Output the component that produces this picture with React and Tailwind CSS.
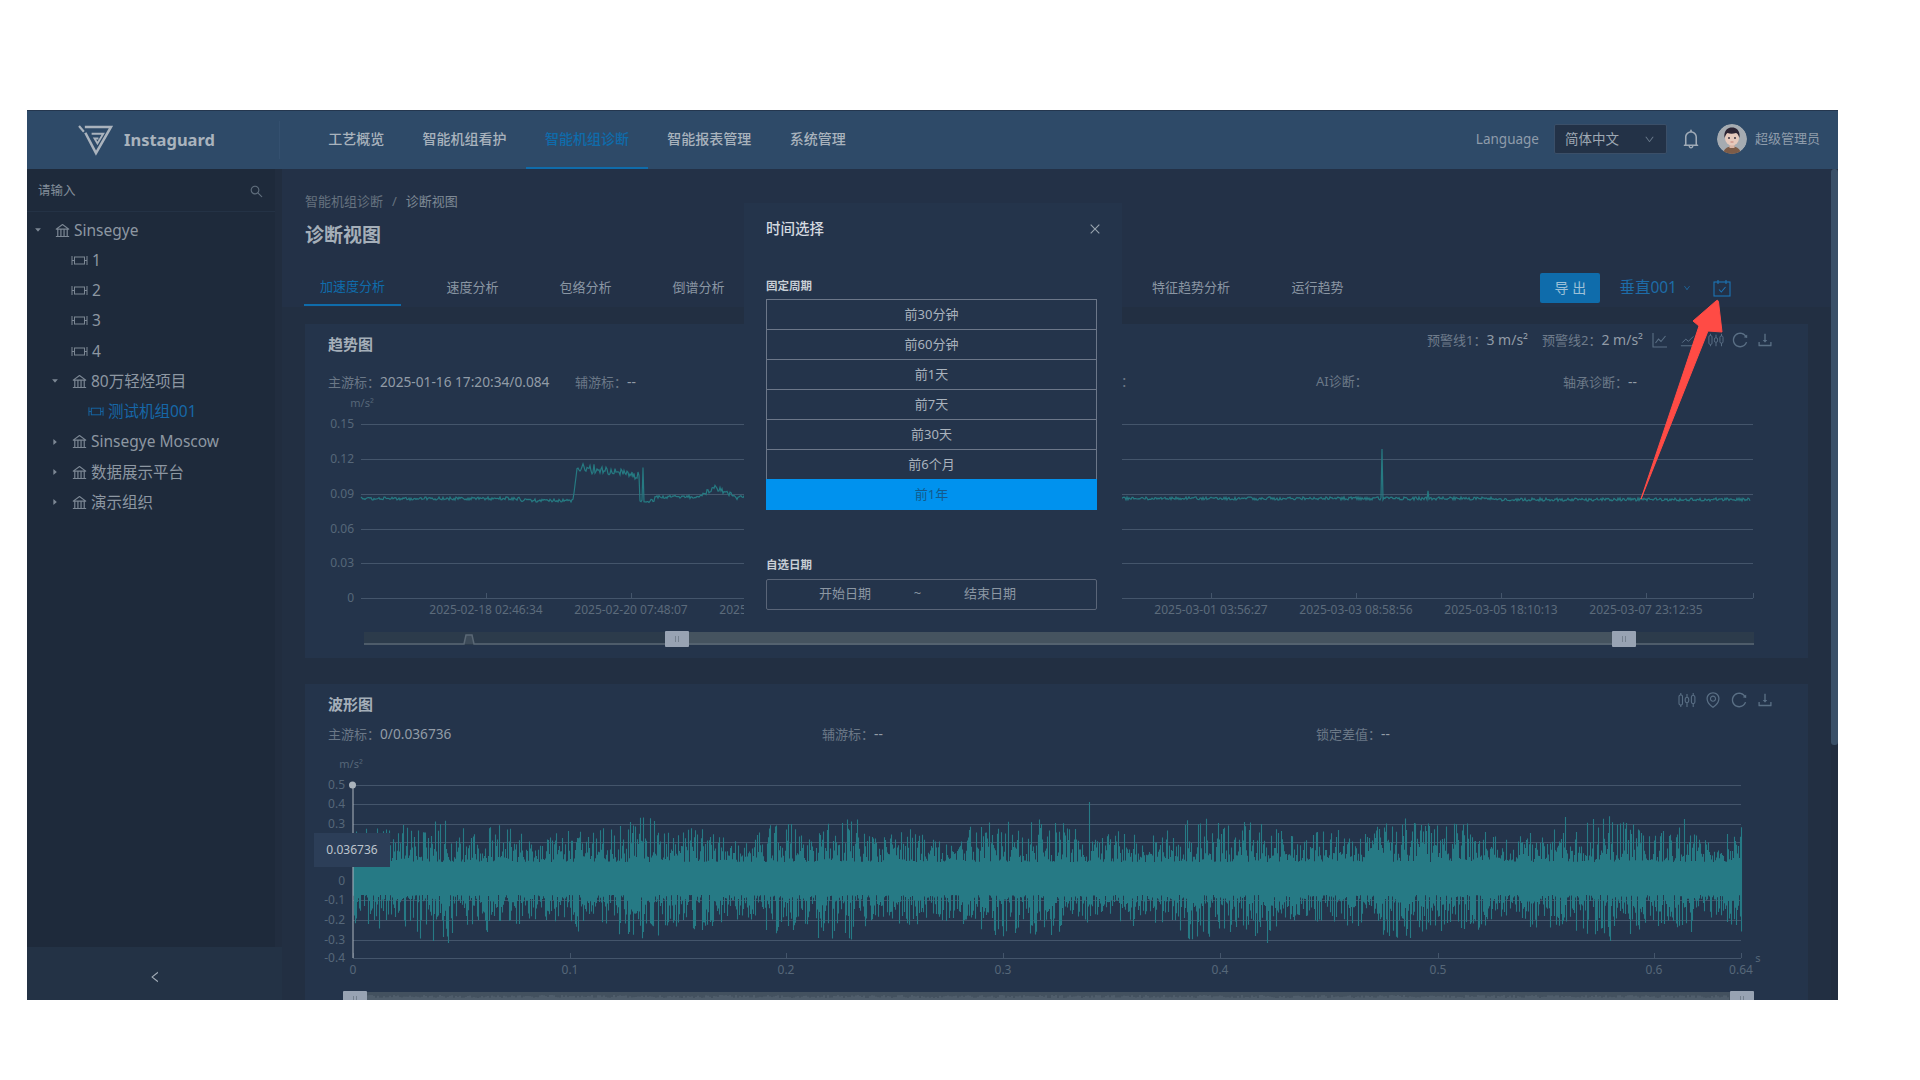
import React from 'react';
import {
    AiOutlineBank,
    AiOutlineBell,
    AiOutlineClose,
    AiOutlineDown,
    AiOutlineDownload,
    AiOutlineEnvironment,
    AiOutlineLeft,
    AiOutlineReload,
    AiOutlineSearch,
    AiFillCaretDown,
    AiFillCaretRight,
} from 'react-icons/ai';

// seeded random so the charts look the same every load
const makeRand = (seed) => () => {
    seed = (seed * 16807) % 2147483647;
    return (seed - 1) / 2147483646;
};

const navItems = ['工艺概览', '智能机组看护', '智能机组诊断', '智能报表管理', '系统管理'];
const presets = ['前30分钟', '前60分钟', '前1天', '前7天', '前30天', '前6个月', '前1年'];
const trendLabels = [
    [486, '2025-02-18 02:46:34'],
    [631, '2025-02-20 07:48:07'],
    [776, '2025-02-22 12:49:40'],
    [1211, '2025-03-01 03:56:27'],
    [1356, '2025-03-03 08:58:56'],
    [1501, '2025-03-05 18:10:13'],
    [1646, '2025-03-07 23:12:35'],
];

const trendPath = () => {
    const r = makeRand(71);
    let d = '';
    for (let x = 361; x <= 1750; x += 1) {
        let y = 498.5;
        if (x >= 520 && x < 573) y = 500.5;
        else if (x >= 573 && x < 577) y = 500 - (x - 573) * 8;
        else if (x >= 577 && x < 640) y = 467 + (x - 577) * 0.14 + (r() - 0.5) * 8;
        else if (x >= 640 && x < 655) y = 501;
        else if (x >= 655 && x < 700) y = 497;
        else if (x >= 700 && x < 745) y = 497 - Math.max(0, 9 - Math.abs(x - 716) * 0.45) + (r() - 0.5) * 4;
        if (x === 643) y = 469;
        if (x === 1382) y = 448;
        if (x === 1428) y = 491;
        if (x > 1500) y += 1;
        y += (r() - 0.5) * 3.2;
        d += `${x === 361 ? 'M' : 'L'}${x} ${y.toFixed(1)}`;
    }
    return d;
};

const wavePath = () => {
    const r = makeRand(913);
    const up = { 403: 825, 1089: 802, 1565: 817, 1684: 819, 1055: 823, 1406: 830 };
    const down = { 448: 943, 1267: 943, 1410: 938, 818: 938, 1691: 932 };
    let d = '';
    for (let x = 353; x <= 1741; x += 1) {
        const env = 1 + 0.2 * Math.sin(x / 31) + 0.12 * Math.sin(x / 11);
        const a = Math.pow(r(), 1.6);
        const b = Math.pow(r(), 1.6);
        const top = up[x] || 862 - a * 36 * env;
        const bottom = down[x] || 895 + b * 36 * env;
        d += `M${x}.5 ${top.toFixed(1)}V${bottom.toFixed(1)}`;
    }
    return d;
};

const miniWave = () => {
    const r = makeRand(37);
    let d = '';
    for (let x = 366; x < 1730; x += 2) {
        d += `M${x} ${(998 - r() * 3).toFixed(1)}V1000`;
    }
    return d;
};

const SliderHandle = ({ x, y }) => (
    <g>
        <rect x={x} y={y} width="24" height="16" rx="1" fill="#98a3b3" />
        <path d={`M${x + 10.5} ${y + 5}v6M${x + 13.5} ${y + 5}v6`} stroke="#75818f" strokeWidth="1" />
    </g>
);

const DeviceIcon = ({ className }) => (
    <svg viewBox="0 0 17 11" fill="none" stroke="currentColor" strokeWidth="1" className={className}>
        <path d="M1 1v9M16 1v9" />
        <rect x="3.500" y="2" width="10" height="7" />
        <path d="M1 5.500h2.500M13.500 5.500H16" />
    </svg>
);

const LineIcon = () => (
    <svg viewBox="0 0 16 16" fill="none" stroke="currentColor" strokeWidth="1.100" className="w-4 h-4">
        <path d="M1 1v14h14M3.500 11l3-4 2.500 2.500L13.500 4" />
    </svg>
);

const AreaIcon = () => (
    <svg viewBox="0 0 18 16" fill="none" stroke="currentColor" strokeWidth="1.100" className="w-4 h-4">
        <path d="M1 14.500h16M2.500 11l4-4 3 2.500L15 4" />
    </svg>
);

const CandleIcon = ({ className }) => (
    <svg viewBox="0 0 18 16" fill="none" stroke="currentColor" strokeWidth="1.100" className={className}>
        <rect x="1" y="3" width="3.500" height="10" rx="1.500" />
        <rect x="7.200" y="5.500" width="3.500" height="5" rx="1.500" />
        <rect x="13.400" y="3.500" width="3.500" height="8" rx="1.500" />
        <path d="M2.800 1v2M2.800 13v2M9 2v3.500M9 10.500V15M15.200 1v2.500M15.200 11.500V15" />
    </svg>
);

const CalendarCheckIcon = () => (
    <svg viewBox="0 0 18 18" fill="none" stroke="currentColor" strokeWidth="1.100" className="w-[18px] h-[18px]">
        <rect x="1" y="3" width="16" height="14" />
        <path d="M5 1v4M13 1v4M6 10.500l2.300 2.500L12.500 8" />
    </svg>
);

const Avatar = () => (
    <svg viewBox="0 0 30 30" className="w-[30px] h-[30px] rounded-full">
        <circle cx="15" cy="15" r="15" fill="#a5abb1" />
        <path d="M6 30c.5-5 4-7.500 9-7.500s8.500 2.500 9 7.500z" fill="#7d5c48" />
        <rect x="12.500" y="18" width="5" height="6" fill="#d9b5a5" />
        <ellipse cx="15" cy="14" rx="7" ry="7.500" fill="#e6c9bc" />
        <path d="M7.500 14C6.500 6 11 3.500 15 3.500S23.500 6 22.500 14c-1-3-2-4.500-3.500-5-3 1-6 1-8.500 0-1.500 1-2 2.500-3 5z" fill="#2c2433" />
        <circle cx="12" cy="14" r=".9" fill="#2c2433" />
        <circle cx="18" cy="14" r=".9" fill="#2c2433" />
        <path d="M13.500 18h3" stroke="#b9695f" strokeWidth=".8" />
    </svg>
);

const TreeGroup = ({ rowClass, caret, name }) => (
    <div className={`h-[30.250px] flex items-center text-[15.500px] text-[#8d97a2] ${rowClass}`}>
        {caret === 'down' ? (
            <AiFillCaretDown className="w-2 h-2 text-[#7c8794]" />
        ) : (
            <AiFillCaretRight className="w-2 h-2 text-[#7c8794]" />
        )}
        <AiOutlineBank className="w-[17px] h-[17px] text-[#7c8794] ml-[12px]" />
        <span className="ml-[3px] whitespace-nowrap">{name}</span>
    </div>
);

const TreeDevice = ({ name }) => (
    <div className="h-[30.250px] flex items-center pl-[44px] text-[15.500px] text-[#8d97a2]">
        <DeviceIcon className="w-[17px] h-[11px] text-[#7c8794]" />
        <span className="ml-[4px]">{name}</span>
    </div>
);

const Sidebar = () => (
    <div className="w-[255px] flex flex-col shrink-0">
        <div className="flex-1 flex min-h-0">
            <div className="w-[248px] bg-[#1e2a3b]">
                <div className="h-[43px] border-b border-[#243245] flex items-center justify-between pt-[2px] pl-[11px] pr-[11px]">
                    <span className="text-[12.500px] text-[#828d99]">请输入</span>
                    <AiOutlineSearch className="w-[15px] h-[15px] text-[#5f6d7c]" />
                </div>
                <div className="pt-[3px]">
                    <TreeGroup rowClass="pl-[7px]" caret="down" name="Sinsegye" />
                    <TreeDevice name="1" />
                    <TreeDevice name="2" />
                    <TreeDevice name="3" />
                    <TreeDevice name="4" />
                    <TreeGroup rowClass="pl-[24px]" caret="down" name="80万轻烃项目" />
                    <div className="h-[30.250px] flex items-center pl-[61px] text-[15.500px] text-[#1668a8]">
                        <DeviceIcon className="w-[16px] h-[11px]" />
                        <span className="ml-[4px] whitespace-nowrap">测试机组001</span>
                    </div>
                    <TreeGroup rowClass="pl-[24px]" caret="right" name="Sinsegye Moscow" />
                    <TreeGroup rowClass="pl-[24px]" caret="right" name="数据展示平台" />
                    <TreeGroup rowClass="pl-[24px]" caret="right" name="演示组织" />
                </div>
            </div>
            <div className="flex-1 bg-[#212d3f]" />
        </div>
        <div className="h-[53px] bg-[#233245] flex items-center justify-center pt-[7px]">
            <AiOutlineLeft className="w-[14px] h-[14px] text-[#a3adb8]" />
        </div>
    </div>
);

const Header = () => (
    <header className="h-[59px] shrink-0 bg-[#2e4a68] border-t border-[#24364e] flex items-center">
        <div className="w-[253px] h-[38px] border-r border-[#34506f] flex items-center pl-[51px] shrink-0">
            <svg viewBox="0 0 36 32" fill="none" stroke="#aab3bd" className="w-[35px] h-[31px]">
                <path d="M7 2h27L18.500 29 7.500 8" strokeWidth="2.600" />
                <path d="M1 1l5 6" strokeWidth="2.200" />
                <path d="M14 9h12l-6 10-3-5h4" strokeWidth="2" />
            </svg>
            <span className="ml-[11px] text-[16.500px] font-bold text-[#a9b3bd]">Instaguard</span>
        </div>
        <nav className="flex ml-[29px] h-full">
            {navItems.map((item) => (
                <div
                    key={item}
                    className={
                        item === '智能机组诊断'
                            ? 'px-[19.200px] pb-[1px] flex items-center text-[14px] font-medium text-[#0f6cab] border-b-2 border-[#0f6cab]'
                            : 'px-[19.200px] pb-[3px] flex items-center text-[14px] font-medium text-[#a9b3bd]'
                    }
                >
                    {item}
                </div>
            ))}
        </nav>
        <div className="ml-auto flex items-center pr-[18px] -mt-[2px]">
            <span className="text-[13.500px] text-[#8f9cab]">Language</span>
            <div className="ml-[15px] w-[113px] h-[30px] bg-[#233247] border border-[#3b4f68] rounded-[2px] flex items-center justify-between pl-[10px] pr-[11px]">
                <span className="text-[13.500px] text-[#9ea8b3]">简体中文</span>
                <AiOutlineDown className="w-[11px] h-[11px] text-[#68788a]" />
            </div>
            <AiOutlineBell className="ml-[13px] w-[22px] h-[22px] text-[#a0abb7]" />
            <div className="ml-[15px]">
                <Avatar />
            </div>
            <span className="ml-[8px] text-[13px] text-[#8f9cab] whitespace-nowrap">超级管理员</span>
        </div>
    </header>
);

const TabsPanel = () => (
    <div className="h-[138px] bg-[#233147] pl-[23px] shrink-0">
        <div className="pt-[22px] h-[41px] flex items-center text-[13px] leading-[18px] text-[#66727f]">
            <span>智能机组诊断</span>
            <span className="mx-[9px]">/</span>
            <span className="text-[#7e8995]">诊断视图</span>
        </div>
        <h1 className="mt-[11px] h-[28px] leading-[28px] text-[19px] font-bold text-[#a5afb9]">诊断视图</h1>
        <div className="mt-[20px] h-[37px] flex items-center text-[13px] text-[#8a96a3]">
            <div className="w-[97px] h-full flex items-center justify-center text-[#0f6cab] border-b-2 border-[#0f6cab] -ml-[1px]">
                加速度分析
            </div>
            <div className="ml-[45px] flex gap-[60px]">
                <span className="w-[53px] text-center">速度分析</span>
                <span className="w-[53px] text-center">包络分析</span>
                <span className="w-[53px] text-center">倒谱分析</span>
            </div>
            <span className="ml-[426px] w-[80px] text-center">特征趋势分析</span>
            <span className="ml-[60px] w-[53px] text-center">运行趋势</span>
            <div className="ml-auto flex items-center pr-[100px]">
                <div className="w-[60px] h-[30px] rounded-[2px] bg-[#0f6cab] text-[#9cc0d8] text-[14px] flex items-center justify-center">
                    导 出
                </div>
                <span className="ml-[19px] text-[15.500px] text-[#1d6ca8]">垂直001</span>
                <AiOutlineDown className="ml-[6px] w-[8px] h-[8px] text-[#1d6ca8]" />
                <div className="ml-[22px] text-[#1d74b4]">
                    <CalendarCheckIcon />
                </div>
            </div>
        </div>
    </div>
);

const Cursor = ({ label, value }) => (
    <span className="text-[13px] text-[#6b7887] whitespace-nowrap">
        {label}
        {value && <span className="text-[13.700px] text-[#929ca7]">{value}</span>}
    </span>
);

const TrendCard = () => {
    const grid = [
        [424.5, '0.15'],
        [459.5, '0.12'],
        [494.5, '0.09'],
        [529.5, '0.06'],
        [563.5, '0.03'],
        [598.5, '0'],
    ];
    return (
        <section className="ml-[23px] w-[1503px] h-[334px] bg-[#24344b] shrink-0">
            <div className="h-[40px] pl-[23px] pr-[34px] flex items-center justify-between">
                <h2 className="text-[15px] font-bold text-[#a5afb9]">趋势图</h2>
                <div className="flex items-center -mt-[8px] text-[13px] text-[#6f7c8b]">
                    <span>
                        预警线1：<span className="text-[14px] text-[#929ca7]">3 m/s²</span>
                    </span>
                    <span className="ml-[14px]">
                        预警线2：<span className="text-[14px] text-[#929ca7]">2 m/s²</span>
                    </span>
                    <div className="ml-[9px] flex items-center text-[#5a6f85]">
                        <LineIcon />
                        <div className="ml-[12px]">
                            <AreaIcon />
                        </div>
                        <CandleIcon className="ml-[12px] w-4 h-4" />
                        <AiOutlineReload className="ml-[7px] w-[18px] h-[18px]" />
                        <AiOutlineDownload className="ml-[7px] w-[18px] h-[18px]" />
                    </div>
                </div>
            </div>
            <div className="mt-[7px] h-[22px] pl-[23px] grid grid-cols-[repeat(6,247px)] items-center">
                <Cursor label="主游标：" value="2025-01-16 17:20:34/0.084" />
                <Cursor label="辅游标：" value="--" />
                <Cursor label="" />
                <Cursor label="锁定差值：" />
                <Cursor label="AI诊断：" />
                <Cursor label="轴承诊断：" value="--" />
            </div>
            <svg viewBox="305 393 1503 265" className="block w-[1503px] h-[265px]">
                <text x="362" y="407" textAnchor="middle" fontSize="11" fill="#566779">m/s²</text>
                {grid.map(([y, label]) => (
                    <g key={label}>
                        <path d={`M361 ${y}H1753`} stroke="#44556b" shapeRendering="crispEdges" />
                        <text x="354" y={y + 3} textAnchor="end" fontSize="12" fill="#566779">{label}</text>
                    </g>
                ))}
                {[486, 631, 776, 921, 1066, 1211, 1356, 1501, 1646, 1753].map((x) => (
                    <path key={x} d={`M${x}.5 598V593`} stroke="#44556b" shapeRendering="crispEdges" />
                ))}
                {trendLabels.map(([x, label]) => (
                    <text key={label} x={x} y="614" textAnchor="middle" fontSize="12" fill="#5c6b7b">{label}</text>
                ))}
                <path d={trendPath()} fill="none" stroke="#267a82" strokeWidth="1.200" />
                <rect x="364" y="632" width="1390" height="13" fill="#2c3b4b" />
                <rect x="677" y="632" width="947" height="13" fill="#45535f" />
                <path d="M364 644H464L466 635H472L474 644H1754" fill="#3c4a58" stroke="#5a6875" strokeWidth="1.500" />
                <SliderHandle x={665} y={631} />
                <SliderHandle x={1612} y={631} />
            </svg>
        </section>
    );
};

const WaveCard = () => {
    // 0.2 and 0.1 sit under the tooltip, so they get a grid line but no label
    const ys = [
        [785.5, '0.5'],
        [804.5, '0.4'],
        [824.5, '0.3'],
        [842.5, ''],
        [862.5, ''],
        [881.5, '0'],
        [900.5, '-0.1'],
        [920.5, '-0.2'],
        [940.5, '-0.3'],
        [958.5, '-0.4'],
    ];
    const xs = [
        [353, '0'],
        [570, '0.1'],
        [786, '0.2'],
        [1003, '0.3'],
        [1220, '0.4'],
        [1438, '0.5'],
        [1654, '0.6'],
        [1741, '0.64'],
    ];
    return (
        <section className="mt-[26px] ml-[23px] w-[1503px] h-[330px] bg-[#24344b] shrink-0">
            <div className="h-[40px] pl-[23px] pr-[34px] flex items-center justify-between">
                <h2 className="text-[15px] font-bold text-[#a5afb9]">波形图</h2>
                <div className="flex items-center gap-[8px] -mt-[9px] text-[#5a6f85]">
                    <CandleIcon className="w-[18px] h-4" />
                    <AiOutlineEnvironment className="w-[18px] h-[18px]" />
                    <AiOutlineReload className="w-[18px] h-[18px]" />
                    <AiOutlineDownload className="w-[18px] h-[18px]" />
                </div>
            </div>
            <div className="h-[22px] pb-[2px] pl-[23px] grid grid-cols-[repeat(3,494px)] items-center">
                <Cursor label="主游标：" value="0/0.036736" />
                <Cursor label="辅游标：" value="--" />
                <Cursor label="锁定差值：" value="--" />
            </div>
            <svg viewBox="305 746 1503 260" className="block w-[1503px] h-[260px]">
                <text x="351" y="768" textAnchor="middle" fontSize="11" fill="#566779">m/s²</text>
                {ys.map(([y, label]) => (
                    <g key={y}>
                        <path d={`M353 ${y}H1741`} stroke="#44556b" shapeRendering="crispEdges" />
                        {label && <text x="345" y={y + 3} textAnchor="end" fontSize="12" fill="#566779">{label}</text>}
                    </g>
                ))}
                {xs.map(([x, label]) => (
                    <g key={label}>
                        <path d={`M${x}.5 958V953`} stroke="#44556b" shapeRendering="crispEdges" />
                        <text x={x} y="974" textAnchor="middle" fontSize="12" fill="#566779">{label}</text>
                    </g>
                ))}
                <text x="1758" y="962" textAnchor="middle" fontSize="11" fill="#566779">s</text>
                <path d={wavePath()} fill="none" stroke="#267a85" strokeWidth="1.100" />
                <path d="M353 785V958" stroke="#aeb6bf" strokeWidth="1" />
                <circle cx="352.500" cy="785" r="3.500" fill="#aab3bc" />
                <rect x="314" y="833" width="76" height="34" fill="#2c3e58" />
                <text x="352" y="854" textAnchor="middle" fontSize="12" fill="#bcc4cc">0.036736</text>
                <rect x="355" y="992" width="1387" height="10" fill="#43515f" />
                <path d={miniWave()} stroke="#5d6b78" strokeWidth="1" />
                <SliderHandle x={343} y={991} />
                <SliderHandle x={1730} y={991} />
            </svg>
        </section>
    );
};

const TimeModal = () => (
    <div className="absolute left-[717px] top-[93px] w-[378px] h-[429px] bg-[#24344b] px-[22px] z-10">
        <div className="h-[52px] flex items-center justify-between">
            <span className="text-[14.500px] font-medium text-[#d5dae0]">时间选择</span>
            <AiOutlineClose className="w-[14px] h-[14px] text-[#98a3ae] -mr-[2px]" />
        </div>
        <div className="mt-[21px] text-[11.500px] font-bold leading-[20px] text-[#c8ced5]">固定周期</div>
        <div className="mt-[3px] w-[331px]">
            {presets.map((item) =>
                item === '前1年' ? (
                    <div key={item} className="h-[30.500px] bg-[#0092ee] flex items-center justify-center text-[13px] text-[#135a8c]">
                        {item}
                    </div>
                ) : (
                    <div
                        key={item}
                        className="h-[30.500px] border border-[#6c7789] -mb-[0.500px] flex items-center justify-center text-[13px] text-[#aab3bd]"
                    >
                        {item}
                    </div>
                ),
            )}
        </div>
        <div className="mt-[45px] text-[11.500px] font-bold leading-[20px] text-[#c8ced5]">自选日期</div>
        <div className="mt-[4px] w-[331px] h-[31px] border border-[#5a6578] rounded-[2px] flex items-center justify-between text-[13px] text-[#8c97a3]">
            <span className="ml-[52px]">开始日期</span>
            <span>~</span>
            <span className="mr-[80px]">结束日期</span>
        </div>
    </div>
);

const App = () => (
    <div className="w-[1920px] h-[1080px] bg-white overflow-hidden pt-[110px] pl-[27px] font-['Noto_Sans','Noto_Sans_CJK_SC',sans-serif]">
        <div className="relative w-[1811px] h-[890px] flex flex-col overflow-hidden bg-[#222f42]">
            <Header />
            <div className="flex-1 flex min-h-0">
                <Sidebar />
                <main className="flex-1 flex flex-col min-w-0 overflow-hidden">
                    <TabsPanel />
                    <div className="h-[17px] shrink-0" />
                    <TrendCard />
                    <WaveCard />
                </main>
                <div className="w-[7px] shrink-0 bg-[#212d3f]">
                    <div className="h-[576px] bg-[#3a5068] rounded-[3px]" />
                </div>
            </div>
            <TimeModal />
            {/* annotation arrow drawn over the screenshot */}
            <svg viewBox="27 110 1811 890" className="absolute inset-0 w-[1811px] h-[890px] z-20 pointer-events-none">
                <path
                    d="M1641 499L1699 326L1693 321L1716 301Q1718 299 1718.500 302L1722 332L1708 331Z"
                    fill="#ff4b45"
                    stroke="#ff4b45"
                    strokeLinejoin="round"
                />
            </svg>
        </div>
    </div>
);

export default App;
